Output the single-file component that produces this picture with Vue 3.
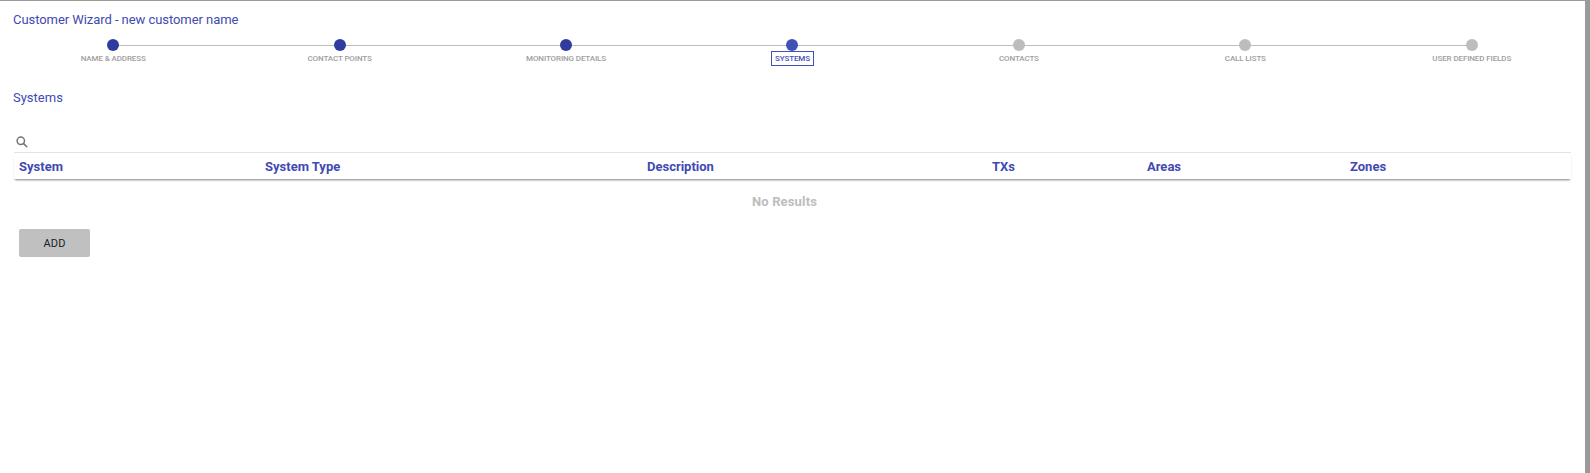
<script setup>
const steps = [
  { label: 'NAME & ADDRESS', state: 'done' },
  { label: 'CONTACT POINTS', state: 'done' },
  { label: 'MONITORING DETAILS', state: 'done' },
  { label: 'SYSTEMS', state: 'active' },
  { label: 'CONTACTS', state: 'todo' },
  { label: 'CALL LISTS', state: 'todo' },
  { label: 'USER DEFINED FIELDS', state: 'todo' },
]
const columns = ['System', 'System Type', 'Description', 'TXs', 'Areas', 'Zones']
</script>

<template>
  <div class="page">
    <main class="panel">
      <h1 class="title">Customer Wizard - new customer name</h1>
      <ol class="stepper">
        <li v-for="s in steps" :key="s.label" class="step" :class="s.state">
          <span class="dot"></span>
          <span class="label">{{ s.label }}</span>
        </li>
      </ol>
      <h2 class="section">Systems</h2>
      <div class="table">
        <div class="search">
          <svg width="12" height="12" viewBox="0 0 12 12" fill="none" stroke="#757575" stroke-width="1.5">
            <circle cx="4.8" cy="4.8" r="3.7" />
            <path d="M7.6 7.6L10.8 10.8" stroke-linecap="round" />
          </svg>
        </div>
        <div class="head">
          <span v-for="c in columns" :key="c">{{ c }}</span>
        </div>
        <div class="empty">No Results</div>
      </div>
      <button class="add" type="button">ADD</button>
    </main>
  </div>
</template>

<style>
html, body { margin: 0; background: #fff; }
</style>

<style scoped>
.page {
  height: 473px;
  overflow: hidden;
  background: #9a9a9a;
  padding: 1px 5px 0 0;
  box-sizing: border-box;
  font-family: Roboto, "Liberation Sans", sans-serif;
}
.panel {
  height: 472px;
  background: #fff;
  overflow: hidden;
}
.title {
  margin: 11px 0 0 13px;
  font-size: 13px;
  line-height: 15px;
  font-weight: 400;
  letter-spacing: -0.06px;
  color: #3f4ab2;
}
.stepper {
  list-style: none;
  margin: 12px 0 0;
  padding: 0;
  display: flex;
}
.step {
  flex: 1 1 0;
  position: relative;
  display: flex;
  flex-direction: column;
  align-items: center;
}
.step:not(:last-child)::after {
  content: "";
  position: absolute;
  top: 6px;
  left: 50%;
  width: 100%;
  height: 1px;
  background: #bdbdbd;
}
.dot {
  position: relative;
  z-index: 1;
  width: 12px;
  height: 12px;
  border-radius: 50%;
  background: #bdbdbd;
}
.done .dot { background: #2f3b9f; }
.active .dot { background: #3f51b5; }
.label {
  margin-top: 0;
  padding: 0 3px;
  border: 1px solid transparent;
  font-size: 8px;
  line-height: 13px;
  font-weight: 500;
  letter-spacing: -0.12px;
  color: #9e9e9e;
}
.active .label {
  border-color: #3f51b5;
  color: #3f51b5;
}
.section {
  margin: 24px 0 0 13px;
  font-size: 13px;
  line-height: 15px;
  font-weight: 400;
  color: #3f4ab2;
}
.table {
  margin: 0 14px;
}
.search {
  height: 22px;
  margin-top: 26px;
  padding-left: 2px;
  display: flex;
  align-items: center;
  border-bottom: 1px solid #e4e4e4;
  box-sizing: border-box;
}
.head {
  display: grid;
  grid-template-columns: 246px 382px 345px 155px 203px 1fr;
  height: 26px;
  align-items: center;
  padding-left: 5px;
  font-size: 13px;
  font-weight: 700;
  color: #3f4ab2;
  box-shadow: 0 2px 2px -1px rgba(0, 0, 0, 0.5);
}
.empty {
  padding: 13px 16px 0 0;
  height: 34px;
  box-sizing: border-box;
  line-height: 20px;
  text-align: center;
  font-size: 13px;
  font-weight: 700;
  letter-spacing: 0.15px;
  color: #bdbdbd;
}
.add {
  display: block;
  margin: 16px 0 0 19px;
  width: 71px;
  height: 28px;
  border: 0;
  border-radius: 2px;
  background: #c0c0c0;
  color: #212121;
  font-family: inherit;
  font-size: 11px;
  font-weight: 400;
  letter-spacing: 0.2px;
  padding: 0;
}
</style>
